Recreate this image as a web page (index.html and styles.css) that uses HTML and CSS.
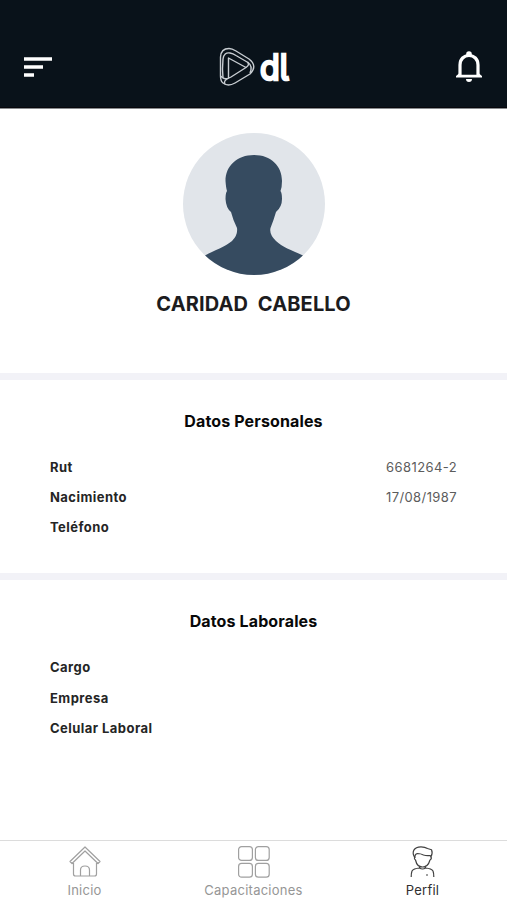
FILE: index.html
```html
<!DOCTYPE html>
<html lang="es">
<head>
<meta charset="utf-8">
<title>Perfil</title>
<link rel="stylesheet" href="styles.css">
</head>
<body>
<div class="app">
  <header class="topbar">
    <svg class="menu" width="28" height="20" viewBox="0 0 28 20"><path d="M0 2h28M0 10h19M0 18h10"/></svg>
    <div class="brand">
      <svg class="mark" width="36" height="40" viewBox="0 0 36 40">
        <path d="M1.500 10Q2 1.500 10 1.500Q13 1.500 17 4L30 12Q39 19 31 27L16 36Q9 40 4 36Q1.500 34 1.500 29Z"/>
        <path d="M9.500 31V11L27 20.500L12 30Q5 34 2 29"/>
        <path d="M4 31Q3 22 4 12Q5 5 11 6Q14 6.500 17 8.500L29 15.500Q34 19 31 26"/>
        <path d="M6 37Q4 34 9.500 31M27 20.500Q31 18 28.500 15"/>
      </svg>
      <span class="word">dl</span>
    </div>
    <svg class="bell" width="28" height="32" viewBox="0 0 28 32">
      <path class="line" d="M5 25V14C5 8 9 4.500 14 4.500S23 8 23 14V25"/>
      <path class="fill" d="M11.200 4.500V3a2.800 2.800 0 0 1 5.600 0v1.500zM4 22.500L1 25v1.500h26V25l-3-2.500v1.200H4zM11 28h6q0 3-3 3t-3-3z"/>
    </svg>
  </header>
  <main>
    <section class="profile">
      <svg class="avatar" width="142" height="142" viewBox="0 0 142 142">
        <defs><clipPath id="round"><circle cx="71" cy="71" r="71"/></clipPath></defs>
        <g clip-path="url(#round)">
          <path class="backdrop" d="M0 0h142v142H0z"/>
          <path class="person" d="M71 22C54 22 42.500 33 42.500 48Q43 55 44 58Q42.500 60 42.500 66Q43 75 48 79Q50 87 54 95Q55 102 49 108C42 114 32 117 22 122.500V142H120V122.500C108 117 99 114 93 108Q86 101 87.500 95Q91 86 93 79Q99 74 99 66Q99 60 97.500 58Q99 54 99 48C99 33 88 22 71 22Z"/>
        </g>
      </svg>
      <h1>CARIDAD  CABELLO</h1>
    </section>
    <section class="data personal">
      <h2>Datos Personales</h2>
      <dl>
        <div><dt>Rut</dt><dd>6681264-2</dd></div>
        <div><dt>Nacimiento</dt><dd>17/08/1987</dd></div>
        <div><dt>Teléfono</dt><dd></dd></div>
      </dl>
    </section>
    <section class="data work">
      <h2>Datos Laborales</h2>
      <dl>
        <div><dt>Cargo</dt><dd></dd></div>
        <div><dt>Empresa</dt><dd></dd></div>
        <div><dt>Celular Laboral</dt><dd></dd></div>
      </dl>
    </section>
  </main>
  <nav class="tabs">
    <a class="tab">
      <svg width="32" height="32" viewBox="0 0 32 32"><path d="M1 15.500L16 1l15 14.500-2 2L16 5 3 17.500zM4.500 17v11q0 2 2 2h19q2 0 2-2V17M11.500 30v-6q0-4 4.500-4t4.500 4v6"/></svg>
      <span>Inicio</span>
    </a>
    <a class="tab">
      <svg width="32" height="32" viewBox="0 0 32 32"><rect x=".6" y=".6" width="13.800" height="13.800" rx="3"/><rect x="17.400" y=".6" width="13.800" height="13.800" rx="3"/><rect x=".6" y="17.400" width="13.800" height="13.800" rx="3"/><rect x="17.400" y="17.400" width="13.800" height="13.800" rx="3"/></svg>
      <span>Capacitaciones</span>
    </a>
    <a class="tab active">
      <svg width="32" height="32" viewBox="0 0 32 32"><path d="M8 12C4 6 7 .8 14 .8q4 0 6.500 1.700l4 1.200q1.500 3-.5 7M8 12q-.5-4 2.500-4.500 3 0 6 1.500 3 1 6.500.5 1.500 1 1 3M7.500 11q-.5 2 1 3 1.500 7 7 7t7.500-7q2-1 1-3.500M12.500 19.500V22q-6 .5-7.500 3-.8 2-.8 6M18.500 19.500V22q6 .5 7.500 3 .8 2 .8 6M12.500 22q3 2 6 0M19 29h2"/></svg>
      <span>Perfil</span>
    </a>
  </nav>
</div>
</body>
</html>
```
FILE: styles.css
```css
* { box-sizing: border-box; }
body { margin: 0; font-family: Inter, "Liberation Sans", sans-serif; background: #fff; }
h1, h2, dl, dd { margin: 0; }
svg { display: block; fill: none; flex: none; }
.app { height: 900px; display: flex; flex-direction: column; }
.topbar { height: 108px; padding: 46px 24px 19px; background: #09121a; border-bottom: 1px solid #07070c; box-shadow: 0 1px 0 #888b8e; display: flex; justify-content: space-between; align-items: center; }
.menu path { stroke: #fff; stroke-width: 3.600; }
.brand { display: flex; align-items: center; gap: 4px; margin-left: 1px; }
.mark { stroke: #c8cdd2; stroke-width: 1.400; stroke-linejoin: round; }
.word { width: 31px; padding-left: 1px; font-size: 35px; line-height: 40px; font-weight: 400; font-feature-settings: "cv05"; color: #fff; -webkit-text-stroke: 2.600px #fff; stroke-linejoin: round; white-space: nowrap; transform: scaleX(.92); transform-origin: left; }
.bell .line { stroke: #fff; stroke-width: 3.200; }
.bell .fill { fill: #fff; }
main { flex: 1; }
.profile { height: 265px; padding-top: 25px; display: flex; flex-direction: column; align-items: center; }
.backdrop { fill: #e1e5ea; }
.person { fill: #364b60; }
h1 { margin-top: 17px; font-size: 20px; line-height: 24px; font-weight: 650; white-space: pre; color: #1c1c1e; letter-spacing: .13px; }
.data { border-top: 7px solid #f2f2f7; padding: 31px 50px 0; }
.personal { height: 200px; }
h2 { font-size: 16px; line-height: 20px; font-weight: 650; text-align: center; color: #080808; letter-spacing: .13px; }
dl { margin-top: 21px; }
dl div { height: 29.900px; display: flex; justify-content: space-between; align-items: center; }
.work dl { margin-top: 21px; }
.work dl div { height: 30.500px; }
dt { font-size: 13px; font-weight: 650; color: #252525; letter-spacing: .45px; }
dd { font-size: 13px; color: #5c5c5c; letter-spacing: .4px; }
.tabs { height: 60px; border-top: 1px solid #dcdcdc; display: flex; }
.tab { flex: 1; padding-top: 5px; display: flex; flex-direction: column; align-items: center; font-size: 13px; line-height: 16px; color: #969696; }
.tab svg { stroke: #a0a0a0; stroke-width: 1.200; stroke-linejoin: round; }
.tab span { margin-top: 4px; letter-spacing: .25px; }
.active { color: #303030; }
.active svg { stroke: #414141; }
```
